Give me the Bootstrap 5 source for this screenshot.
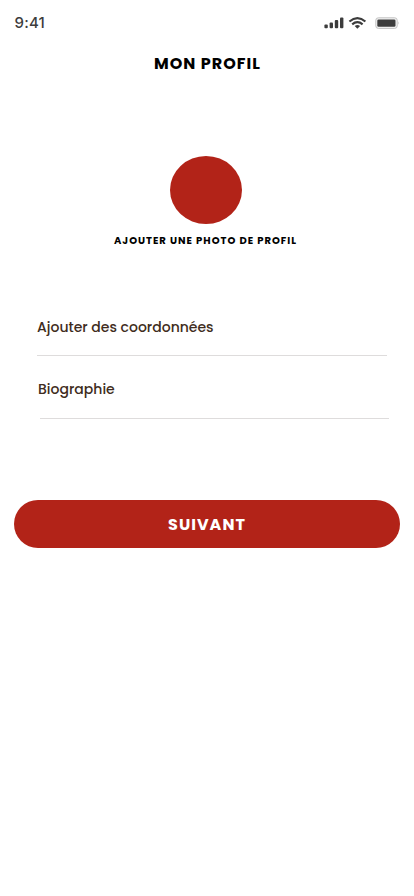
<!DOCTYPE html>
<html lang="fr">
<head>
<meta charset="utf-8">
<meta name="viewport" content="width=device-width, initial-scale=1">
<title>Mon profil</title>
<link href="https://cdn.jsdelivr.net/npm/bootstrap@5.3.0/dist/css/bootstrap.min.css" rel="stylesheet">
<style>
body { font-family: Poppins, Inter, sans-serif; background: #fff; color: #000; }
.screen { width: 414px; height: 896px; }
.status-bar { height: 46px; padding: 0 14px 0 14.5px; color: #3c3c3c; }
.clock { font-family: Inter, sans-serif; font-size: 15px; font-weight: 500; line-height: 18px; letter-spacing: .2px; }
.page-title { font-size: 16px; font-weight: 700; line-height: 24px; letter-spacing: 1px; margin-top: 6px; padding-left: 1px; }
.avatar { width: 72px; height: 68px; background: #b22318; margin-top: 80px; margin-left: 170px; border-radius: 50%; }
.avatar-label { font-size: 10px; font-weight: 700; line-height: 16px; letter-spacing: 1px; margin-top: 9px; padding-right: 3px; }
.profile-field { width: 350px; height: 63px; border: 0; border-bottom: 1px solid #dedcdc; color: #402c20; font-size: 14px; font-weight: 500; line-height: 20px; letter-spacing: 0; }
.contact-field { margin-left: 37px; margin-top: 44px; padding-top: 24px; }
.bio-field { width: 349px; margin-left: 40px; padding-top: 23px; text-indent: -2px; }
.next-btn { width: 386px; height: 48px; margin: 81px 0 0 14px; font-size: 16px; font-weight: 700; letter-spacing: 1px; --bs-btn-color: #fff; --bs-btn-bg: #b22318; --bs-btn-hover-bg: #991c13; --bs-btn-hover-color: #fff; }
.next-btn span { display: block; padding-top: 2px; }
</style>
<script src="https://cdn.jsdelivr.net/npm/bootstrap@5.3.0/dist/js/bootstrap.bundle.min.js"></script>
</head>
<body>
<div class="screen overflow-hidden">
  <header class="status-bar d-flex align-items-center justify-content-between">
    <span class="clock">9:41</span>
    <svg width="77" height="14" viewBox="323 16 77 14" aria-hidden="true">
      <g fill="#3c3c3c">
        <rect x="324.4" y="24.5" width="3.4" height="3.7" rx="1"/>
        <rect x="329.6" y="22.6" width="3.4" height="5.6" rx="1"/>
        <rect x="334.8" y="20" width="3.4" height="8.2" rx="1"/>
        <rect x="340" y="17.4" width="3.4" height="10.8" rx="1"/>
      </g>
      <g fill="none" stroke="#3c3c3c" stroke-width="2.2">
        <path d="M349.4 21.5Q357.4 14.9 365.4 21.5"/>
        <path d="M352.2 24.3Q357.4 20 362.6 24.3"/>
      </g>
      <path d="M354.7 26Q357.4 24.2 360.1 26L357.4 28.7Z" fill="#3c3c3c"/>
      <rect x="375.8" y="17.8" width="21.4" height="10.6" rx="2.5" fill="#f4f4f4" stroke="#c2c2c2"/>
      <rect x="377.3" y="19.4" width="18.2" height="7.4" rx="1.3" fill="#3c3c3c"/>
      <path d="M398.3 21.2q1.5 1.8 0 3.6z" fill="#c2c2c2"/>
    </svg>
  </header>
  <main>
    <h1 class="page-title text-center mb-0 text-uppercase">Mon profil</h1>
    <div class="avatar"></div>
    <p class="avatar-label text-center mb-0 text-uppercase">Ajouter une photo de profil</p>
    <div class="profile-field contact-field"><span>Ajouter des coordonnées</span></div>
    <div class="profile-field bio-field"><span>Biographie</span></div>
    <button type="button" class="btn next-btn rounded-pill border-0 p-0 d-block text-uppercase"><span>Suivant</span></button>
  </main>
</div>
</body>
</html>
